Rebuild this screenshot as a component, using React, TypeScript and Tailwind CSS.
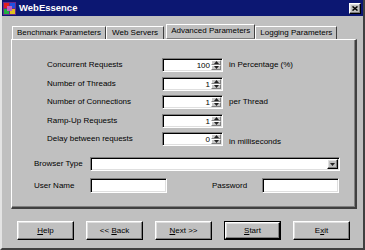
import React from "react";

const font = "font-['Liberation_Sans',Arial,sans-serif]";
const sunken =
  "bg-white border border-t-[#808080] border-l-[#808080] border-b-white border-r-white shadow-[inset_1px_1px_0_#000,inset_-1px_-1px_0_#dfdfdf]";
const raised =
  "bg-[#c0c0c0] border border-t-white border-l-white border-b-black border-r-black shadow-[inset_-1px_-1px_0_#808080,inset_1px_1px_0_#dfdfdf]";
const spinBtn =
  "bg-[#c8c8c8] border border-t-white border-l-white border-b-[#808080] border-r-[#808080]";

function Tri({ up }: { up?: boolean }) {
  return (
    <svg width="5" height="3" viewBox="0 0 5 3" className="block">
      {up ? <polygon points="2.5,0 5,3 0,3" fill="#222" /> : <polygon points="0,0 5,0 2.5,3" fill="#222" />}
    </svg>
  );
}

function Spin({ value }: { value: string }) {
  return (
    <div className={`${sunken} w-[61px] h-[14px] flex items-stretch p-[1px]`}>
      <div className="flex-1 text-right pr-[1px] leading-[12px] text-[8px]">{value}</div>
      <div className="w-[10px] flex flex-col">
        <div className={`${spinBtn} flex-1 flex items-center justify-center`}>
          <Tri up />
        </div>
        <div className={`${spinBtn} flex-1 flex items-center justify-center`}>
          <Tri />
        </div>
      </div>
    </div>
  );
}

function Row({ label, value, suffix, low }: { label: string; value: string; suffix?: string; low?: boolean }) {
  return (
    <div className="flex items-center h-[14px]">
      <div className="w-[115px] text-[8px] leading-none">{label}</div>
      <Spin value={value} />
      {suffix && <div className={`ml-[6px] text-[8px] leading-none ${low ? "mt-[5px]" : ""}`}>{suffix}</div>}
    </div>
  );
}

function Btn({ children, def }: { children: React.ReactNode; def?: boolean }) {
  return (
    <div className={`w-[57px] h-[19px] ${def ? "border border-black" : ""}`}>
      <div className={`${raised} w-full h-full flex items-center justify-center text-[8px] leading-none`}>{children}</div>
    </div>
  );
}

export default function App() {
  return (
    <div
      className={`${font} w-[365px] h-[250px] bg-[#c0c0c0] border-l-2 border-l-[#e4e4e4] border-r-2 border-r-[#404040] border-b-2 border-b-[#404040] text-black flex flex-col overflow-hidden`}
    >
      {/* Title bar */}
      <div className="h-[16px] bg-[#0c1772] flex items-center pl-[1px] pr-[2px] shrink-0">
        <svg width="13" height="13" viewBox="0 0 13 13" className="shrink-0">
          <rect x="0" y="0" width="13" height="13" fill="#6a2a8a" />
          <rect x="1" y="1" width="5" height="5" fill="#e02020" />
          <rect x="7" y="1" width="5" height="5" fill="#2050e0" />
          <rect x="1" y="7" width="5" height="5" fill="#20b040" />
          <rect x="7" y="7" width="5" height="5" fill="#e0c020" />
          <rect x="4" y="4" width="5" height="5" fill="#c060c0" />
        </svg>
        <div className="ml-[3px] text-white font-bold text-[9.5px] leading-none flex-1">WebEssence</div>
        <div className={`${raised} w-[12px] h-[11px] flex items-center justify-center`}>
          <svg width="6" height="5" viewBox="0 0 6 5">
            <path d="M0.5 0.5 L5.5 4.5 M5.5 0.5 L0.5 4.5" stroke="#000" strokeWidth="1.5" />
          </svg>
        </div>
      </div>

      {/* Tabs */}
      <div className="mt-[8px] ml-[10px] flex items-end h-[15px] text-[8px] leading-none">
        <div className="h-[13px] px-[4px] border-t border-l border-t-white border-l-white border-r border-r-[#404040] flex items-center">
          Benchmark Parameters
        </div>
        <div className="h-[13px] px-[5px] border-t border-t-white border-r border-r-[#404040] border-l border-l-white flex items-center">
          Web Servers
        </div>
        <div className="ml-[2px] h-[15px] px-[4px] border border-t-white border-l-white border-r-[#404040] border-b-[#808080] flex items-center pb-[1px]">
          Advanced Parameters
        </div>
        <div className="h-[13px] px-[4px] border-t border-t-white border-l border-l-white border-r border-r-[#404040] flex items-center">
          Logging Parameters
        </div>
      </div>

      {/* Panel */}
      <div className="ml-[9px] w-[346px] h-[170px] border-t border-l border-t-white border-l-white border-r-2 border-b-2 border-r-[#404040] border-b-[#404040] shadow-[inset_-1px_-1px_0_#808080] text-[8px] leading-none">
        <div className="pt-[18px] pl-[35px] flex flex-col gap-[4.5px]">
          <Row label="Concurrent Requests" value="100" suffix="in Percentage (%)" />
          <Row label="Number of Threads" value="1" />
          <Row label="Number of Connections" value="1" suffix="per Thread" />
          <Row label="Ramp-Up Requests" value="1" />
          <Row label="Delay between requests" value="0" suffix="in milliseconds" low />
        </div>
        <div className="mt-[11px] pl-[22px] flex items-center h-[14px]">
          <div className="w-[56px]">Browser Type</div>
          <div className={`${sunken} w-[250px] h-[14px] flex justify-end items-stretch p-[1px]`}>
            <div className={`${raised} w-[11px] flex items-center justify-center`}>
              <Tri />
            </div>
          </div>
        </div>
        <div className="mt-[7px] pl-[22px] flex items-center h-[15px]">
          <div className="w-[56px]">User Name</div>
          <div className={`${sunken} w-[77px] h-[15px]`} />
          <div className="ml-[45px] w-[50px]">Password</div>
          <div className={`${sunken} w-[77px] h-[15px]`} />
        </div>
      </div>

      {/* Buttons */}
      <div className="mt-[12px] ml-[15px] flex gap-[12px]">
        <Btn>
          <span className="underline">H</span>elp
        </Btn>
        <Btn>
          {"<<\u00a0"}
          <span className="underline">B</span>ack
        </Btn>
        <Btn>
          <span className="underline">N</span>
          {"ext\u00a0>>"}
        </Btn>
        <Btn def>
          <span className="underline">S</span>tart
        </Btn>
        <Btn>
          E<span className="underline">x</span>it
        </Btn>
      </div>
    </div>
  );
}
